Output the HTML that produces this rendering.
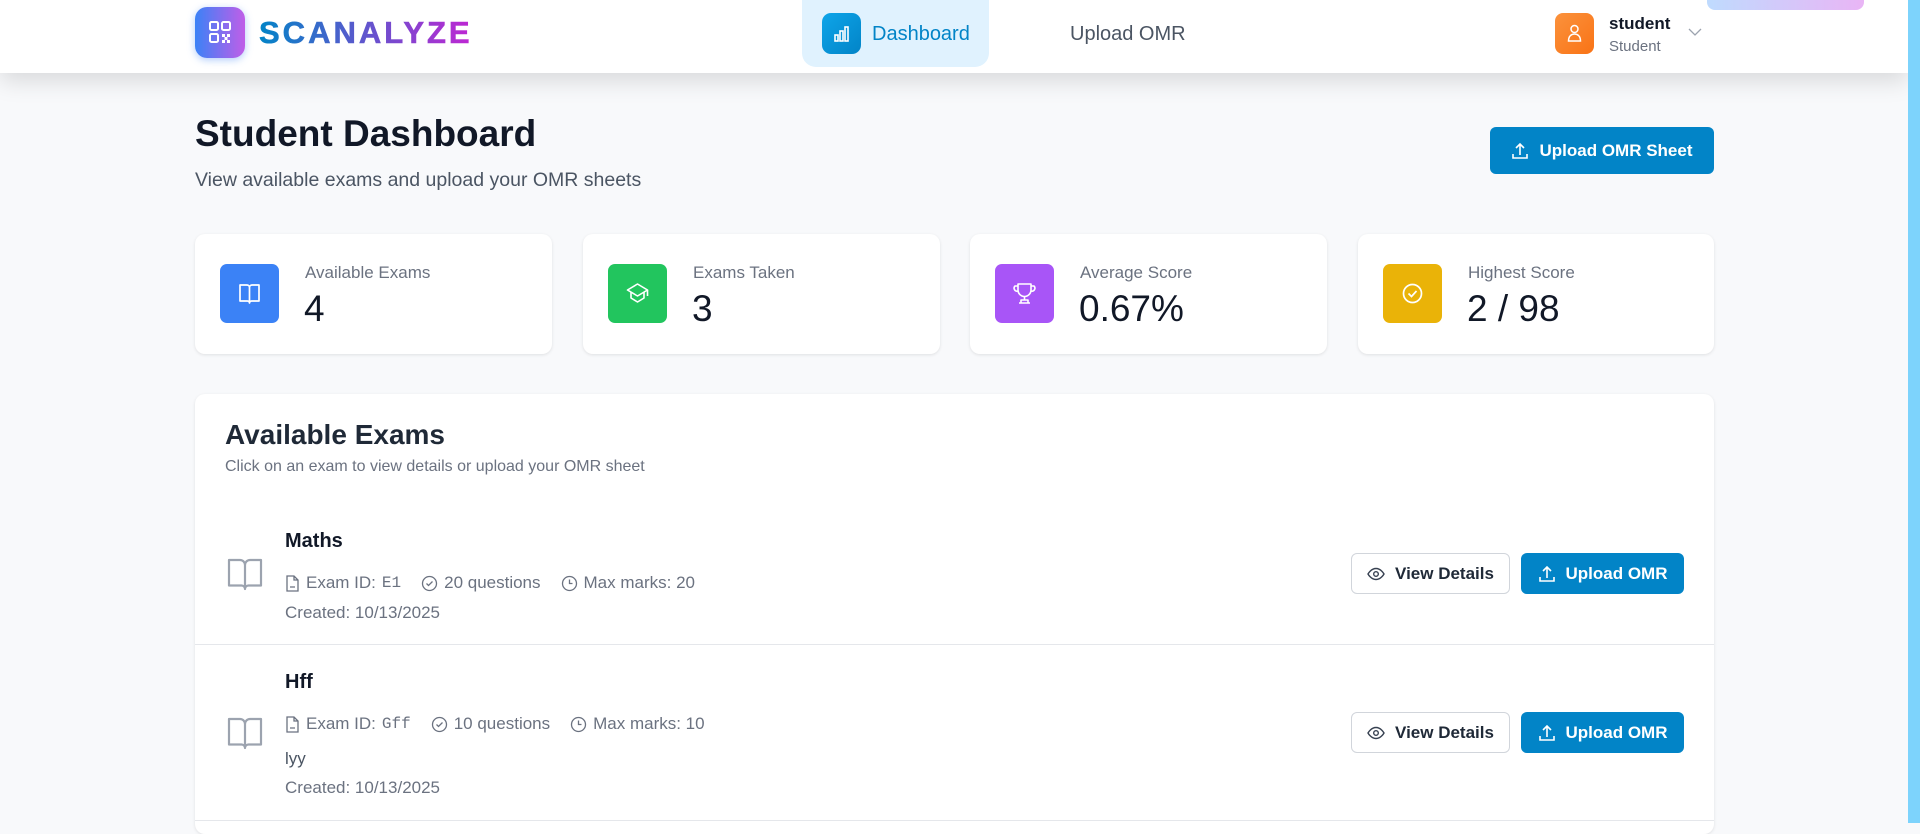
<!DOCTYPE html>
<html><head><meta charset="utf-8"><style>
*{box-sizing:border-box;margin:0;padding:0}
body{width:1920px;height:823px;overflow:hidden;background:#f8f9fb;font-family:"Liberation Sans",sans-serif;position:relative;color:#111827}
.abs{position:absolute}
header{position:absolute;left:0;top:0;width:1908px;height:73px;background:#fff;box-shadow:0 8px 22px rgba(0,0,0,.13);z-index:2}
.logo{left:195px;top:7px;width:50px;height:51px;border-radius:12px;background:linear-gradient(90deg,#3b82f6,#c05ee8);box-shadow:0 2px 8px rgba(59,130,246,.4)}
.brand{left:259px;top:15px;font:900 31px "Liberation Sans",sans-serif;letter-spacing:3px;background:linear-gradient(90deg,#0284c7,#c026d3);-webkit-background-clip:text;color:transparent;-webkit-text-stroke:0.6px transparent}
.pill{left:802px;top:0;width:187px;height:67px;border-radius:0 0 14px 14px;background:#e0f2fe}
.picon{left:822px;top:13px;width:39px;height:41px;border-radius:9px;background:linear-gradient(135deg,#0ea5e9,#0284c7)}
.card{background:#fff;border-radius:10px;box-shadow:0 1px 3px rgba(0,0,0,.1)}
.ic{width:59px;height:59px;border-radius:7px}
.lbl{font-size:17px;color:#6b7280}
.val{font-size:37px;color:#111827}
.btn1{background:#fff;border:1px solid #d1d5db;border-radius:6px;font-size:17px;font-weight:bold;color:#1f2937}
.btn2{background:#0284c7;border-radius:6px;font-size:17px;font-weight:bold;color:#fff}
.btn1,.btn2{display:flex;align-items:center;justify-content:center;gap:10px}
.meta{font-size:17px;color:#6b7280;display:flex;align-items:center}
.meta span{display:inline-flex;align-items:center;gap:6px;margin-right:20px}
</style></head><body>
<header>
 <div class="abs logo"><svg width="50" height="51" viewBox="0 0 50 51"><g fill="none" stroke="#fff" stroke-width="2"><rect x="15" y="15" width="8" height="8" rx="1.5"/><rect x="27" y="15" width="8" height="8" rx="1.5"/><rect x="15" y="27" width="8" height="8" rx="1.5"/></g><g fill="#fff"><rect x="27" y="27" width="3" height="3"/><rect x="32" y="27" width="3" height="3"/><rect x="29.5" y="30" width="3" height="3"/><rect x="27" y="33" width="3" height="3"/><rect x="32" y="33" width="3" height="3"/></g></svg></div>
 <div class="abs brand">SCANALYZE</div>
 <div class="abs pill"></div>
 <div class="abs picon"><svg width="39" height="41" viewBox="0 0 39 41"><g fill="none" stroke="#fff" stroke-width="1.6"><rect x="13" y="22" width="3" height="6"/><rect x="18" y="18" width="3" height="10"/><rect x="23" y="14" width="3" height="14"/></g></svg></div>
 <div class="abs" style="left:872px;top:23px;font-size:20px;color:#0284c7">Dashboard</div>
 <div class="abs" style="left:1070px;top:23px;font-size:20px;color:#4b5563">Upload OMR</div>
 <div class="abs" style="left:1555px;top:13px;width:39px;height:41px;border-radius:8px;background:linear-gradient(135deg,#fb923c,#f97316)"><svg width="39" height="41" viewBox="0 0 39 41"><g fill="none" stroke="#fff" stroke-width="1.5"><circle cx="19.5" cy="16" r="3.5"/><path d="M13.5 28c0-5 3-7 6-7s6 2 6 7z"/></g></svg></div>
 <div class="abs" style="left:1609px;top:14px;font-size:17px;font-weight:bold;color:#111827">student</div>
 <div class="abs" style="left:1609px;top:38px;font-size:15px;color:#6b7280">Student</div>
 <svg class="abs" style="left:1688px;top:27px" width="14" height="10" viewBox="0 0 14 10"><path d="M1 2l6 6 6-6" fill="none" stroke="#9ca3af" stroke-width="1.3"/></svg>
</header>
<div class="abs" style="left:1707px;top:0;width:157px;height:10px;border-radius:0 0 8px 8px;background:linear-gradient(90deg,#bfdbfe,#e9b5f5);z-index:3"></div>
<div class="abs" style="left:1908px;top:0;width:12px;height:823px;background:#7dd3fc;z-index:3"></div>

<div class="abs" style="left:195px;top:113px;font-size:37px;font-weight:bold;color:#111827">Student Dashboard</div>
<div class="abs" style="left:195px;top:169px;font-size:19.5px;color:#4b5563">View available exams and upload your OMR sheets</div>
<div class="abs btn2" style="left:1490px;top:127px;width:224px;height:47px"><svg width="18" height="18" viewBox="0 0 18 18"><g fill="none" stroke="#fff" stroke-width="1.6"><path d="M9 13V2M5 6l4-4 4 4M2 12v4h14v-4"/></g></svg>Upload OMR Sheet</div>

<div class="abs card" style="left:195px;top:234px;width:357px;height:120px"></div>
<div class="abs card" style="left:583px;top:234px;width:357px;height:120px"></div>
<div class="abs card" style="left:970px;top:234px;width:357px;height:120px"></div>
<div class="abs card" style="left:1358px;top:234px;width:356px;height:120px"></div>

<div class="abs ic" style="left:220px;top:264px;background:#3b82f6"><svg width="59" height="59" viewBox="0 0 59 59"><path d="M20 21h7a2.5 2.5 0 0 1 2.5 2.5V39a2 2 0 0 0-2-2H20zM39 21h-7a2.5 2.5 0 0 0-2.5 2.5V39a2 2 0 0 1 2-2H39z" fill="none" stroke="#fff" stroke-width="1.7" stroke-linejoin="round"/></svg></div>
<div class="abs ic" style="left:608px;top:264px;background:#22c55e"><svg width="59" height="59" viewBox="0 0 59 59"><g fill="none" stroke="#fff" stroke-width="1.6" stroke-linejoin="round"><path d="M29.5 20l10 6-10 6-10-6z"/><path d="M23 28v6l6.5 4 6.5-4v-6M39.5 26v6"/></g></svg></div>
<div class="abs ic" style="left:995px;top:264px;background:#a855f7"><svg width="59" height="59" viewBox="0 0 59 59"><g fill="none" stroke="#fff" stroke-width="1.6" stroke-linejoin="round"><path d="M23 20h13v6a6.5 6.5 0 0 1-13 0z"/><path d="M23 22h-3a3 3 0 0 0 3 5M36 22h3a3 3 0 0 1-3 5M29.5 32.5V36M24 39h11M26 36h7v3h-7z"/></g></svg></div>
<div class="abs ic" style="left:1383px;top:264px;background:#eab308"><svg width="59" height="59" viewBox="0 0 59 59"><g fill="none" stroke="#fff" stroke-width="1.7"><circle cx="29.5" cy="29.5" r="9"/><path d="M25.5 29.5l3 3 5-5.5"/></g></svg></div>

<div class="abs lbl" style="left:305px;top:263px">Available Exams</div><div class="abs val" style="left:304px;top:288px">4</div>
<div class="abs lbl" style="left:693px;top:263px">Exams Taken</div><div class="abs val" style="left:692px;top:288px">3</div>
<div class="abs lbl" style="left:1080px;top:263px">Average Score</div><div class="abs val" style="left:1079px;top:288px">0.67%</div>
<div class="abs lbl" style="left:1468px;top:263px">Highest Score</div><div class="abs val" style="left:1467px;top:288px">2 / 98</div>

<div class="abs card" style="left:195px;top:394px;width:1519px;height:440px"></div>
<div class="abs" style="left:225px;top:419px;font-size:28px;font-weight:bold;color:#1f2937">Available Exams</div>
<div class="abs" style="left:225px;top:458px;font-size:16px;color:#6b7280">Click on an exam to view details or upload your OMR sheet</div>

<svg class="abs" style="left:227px;top:557px" width="36" height="34" viewBox="0 0 36 34"><path d="M2 3h11a5 5 0 0 1 5 5v24a3.5 3.5 0 0 0-3.5-3.5H2zM34 3H23a5 5 0 0 0-5 5v24a3.5 3.5 0 0 1 3.5-3.5H34z" fill="none" stroke="#9ca3af" stroke-width="2.2" stroke-linejoin="round"/></svg>
<div class="abs" style="left:285px;top:530px;font-size:20px;font-weight:bold;color:#111827">Maths</div>
<div class="abs meta" style="left:285px;top:573px"><span><svg width="15" height="17" viewBox="0 0 15 17"><path d="M2 1h7l4 4v11H2zM9 1v4h4M5 12h5" fill="none" stroke="#6b7280" stroke-width="1.3"/></svg>Exam ID: <tt style="font-family:'Liberation Mono',monospace;font-size:16px">E1</tt></span><span><svg width="17" height="17" viewBox="0 0 17 17"><circle cx="8.5" cy="8.5" r="7" fill="none" stroke="#6b7280" stroke-width="1.3"/><path d="M5.5 8.5l2 2 4-4" fill="none" stroke="#6b7280" stroke-width="1.3"/></svg>20 questions</span><span><svg width="17" height="17" viewBox="0 0 17 17"><circle cx="8.5" cy="8.5" r="7" fill="none" stroke="#6b7280" stroke-width="1.3"/><path d="M8.5 4.5v4h3" fill="none" stroke="#6b7280" stroke-width="1.3"/></svg>Max marks: 20</span></div>
<div class="abs" style="left:285px;top:603px;font-size:17px;color:#6b7280">Created: 10/13/2025</div>
<div class="abs btn1" style="left:1351px;top:553px;width:159px;height:41px"><svg width="18" height="14" viewBox="0 0 18 14"><path d="M1 7s3-5.5 8-5.5S17 7 17 7s-3 5.5-8 5.5S1 7 1 7z" fill="none" stroke="#374151" stroke-width="1.4"/><circle cx="9" cy="7" r="2.3" fill="none" stroke="#374151" stroke-width="1.4"/></svg>View Details</div>
<div class="abs btn2" style="left:1521px;top:553px;width:163px;height:41px"><svg width="18" height="18" viewBox="0 0 18 18"><path d="M9 13V2M5 6l4-4 4 4M2 12v4h14v-4" fill="none" stroke="#fff" stroke-width="1.6"/></svg>Upload OMR</div>
<div class="abs" style="left:195px;top:644px;width:1519px;height:1px;background:#e5e7eb"></div>

<svg class="abs" style="left:227px;top:716px" width="36" height="34" viewBox="0 0 36 34"><path d="M2 3h11a5 5 0 0 1 5 5v24a3.5 3.5 0 0 0-3.5-3.5H2zM34 3H23a5 5 0 0 0-5 5v24a3.5 3.5 0 0 1 3.5-3.5H34z" fill="none" stroke="#9ca3af" stroke-width="2.2" stroke-linejoin="round"/></svg>
<div class="abs" style="left:285px;top:671px;font-size:20px;font-weight:bold;color:#111827">Hff</div>
<div class="abs meta" style="left:285px;top:714px"><span><svg width="15" height="17" viewBox="0 0 15 17"><path d="M2 1h7l4 4v11H2zM9 1v4h4M5 12h5" fill="none" stroke="#6b7280" stroke-width="1.3"/></svg>Exam ID: <tt style="font-family:'Liberation Mono',monospace;font-size:16px">Gff</tt></span><span><svg width="17" height="17" viewBox="0 0 17 17"><circle cx="8.5" cy="8.5" r="7" fill="none" stroke="#6b7280" stroke-width="1.3"/><path d="M5.5 8.5l2 2 4-4" fill="none" stroke="#6b7280" stroke-width="1.3"/></svg>10 questions</span><span><svg width="17" height="17" viewBox="0 0 17 17"><circle cx="8.5" cy="8.5" r="7" fill="none" stroke="#6b7280" stroke-width="1.3"/><path d="M8.5 4.5v4h3" fill="none" stroke="#6b7280" stroke-width="1.3"/></svg>Max marks: 10</span></div>
<div class="abs" style="left:285px;top:749px;font-size:17px;color:#4b5563">lyy</div>
<div class="abs" style="left:285px;top:778px;font-size:17px;color:#6b7280">Created: 10/13/2025</div>
<div class="abs btn1" style="left:1351px;top:712px;width:159px;height:41px"><svg width="18" height="14" viewBox="0 0 18 14"><path d="M1 7s3-5.5 8-5.5S17 7 17 7s-3 5.5-8 5.5S1 7 1 7z" fill="none" stroke="#374151" stroke-width="1.4"/><circle cx="9" cy="7" r="2.3" fill="none" stroke="#374151" stroke-width="1.4"/></svg>View Details</div>
<div class="abs btn2" style="left:1521px;top:712px;width:163px;height:41px"><svg width="18" height="18" viewBox="0 0 18 18"><path d="M9 13V2M5 6l4-4 4 4M2 12v4h14v-4" fill="none" stroke="#fff" stroke-width="1.6"/></svg>Upload OMR</div>
<div class="abs" style="left:195px;top:820px;width:1519px;height:1px;background:#e5e7eb"></div>
</body></html>
